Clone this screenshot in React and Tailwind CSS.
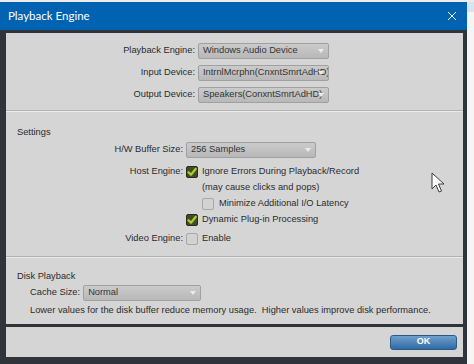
import React from 'react';

const font = { fontFamily: '"Liberation Sans", Arial, sans-serif' };

function Dropdown({ value, width }) {
  return (
    <div
      className="relative h-[16px] flex items-center rounded-[2px] border border-[#a0a0a0] bg-gradient-to-b from-[#cbcbcb] to-[#b8b8b8] pl-[4px] text-[#333333] overflow-hidden whitespace-nowrap"
      style={{ width }}
    >
      <span className="pr-[12px]">{value}</span>
      <span className="absolute right-[4px] top-[5px] w-0 h-0 border-l-[3px] border-r-[3px] border-t-[4px] border-l-transparent border-r-transparent border-t-[#ececec]" />
    </div>
  );
}

function Check({ on }) {
  if (on) {
    return (
      <div className="w-[12px] h-[12px] rounded-[2px] bg-[#45472f] border border-[#2a2c20] flex items-center justify-center shrink-0">
        <svg width="10" height="10" viewBox="0 0 10 10">
          <path d="M1.5 5.2 L4 7.8 L8.8 1.8" fill="none" stroke="#a8d21e" strokeWidth="2.2" strokeLinecap="round" strokeLinejoin="round" />
        </svg>
      </div>
    );
  }
  return <div className="w-[12px] h-[12px] rounded-[2px] bg-[#d2d2d2] border border-[#a8a8a8] shrink-0" />;
}

function Row({ label, labelW, children, className = '' }) {
  return (
    <div className={`flex items-center h-[16px] ${className}`}>
      <div className="text-right pr-[3px] shrink-0" style={{ width: labelW }}>{label}</div>
      {children}
    </div>
  );
}

export default function App() {
  return (
    <div className="w-[474px] h-[364px] overflow-hidden bg-[#f3f3f3] flex flex-col" style={font}>
      <div className="h-[2px] bg-[#ececec]" />
      <div className="flex flex-1">
        <div className="w-[467px] flex flex-col">
          {/* title bar */}
          <div className="h-[28px] bg-[#0063b1] flex items-center justify-between pl-[8px] pr-[10px]">
            <span className="text-white text-[11.5px]" style={{ fontFamily: 'Lato, "Liberation Sans", sans-serif' }}>Playback Engine</span>
            <svg width="10" height="10" viewBox="0 0 10 10">
              <path d="M1 1 L9 9 M9 1 L1 9" stroke="#ffffff" strokeWidth="1" />
            </svg>
          </div>

          {/* body */}
          <div className="flex-1 bg-[#2e343a] pl-[6px] pr-[4px] pt-[3px] pb-[7px] flex flex-col gap-[3px]">
            <div className="bg-[#d5d5d5] text-[9.3px] text-[#2b2b2b] flex flex-col">
              {/* devices */}
              <div className="h-[78px] pt-[10px] flex flex-col gap-[6px] border-b border-[#b2b2b2]">
                <Row label="Playback Engine:" labelW={192}>
                  <Dropdown value="Windows Audio Device" width={131} />
                </Row>
                <Row label="Input Device:" labelW={192}>
                  <Dropdown value="IntrnlMcrphn(CnxntSmrtAdHD)" width={131} />
                </Row>
                <Row label="Output Device:" labelW={192}>
                  <Dropdown value="Speakers(ConxntSmrtAdHD)" width={131} />
                </Row>
              </div>

              {/* settings */}
              <div className="h-[146px] border-t border-[#ebebeb] border-b border-b-[#b2b2b2] relative">
                <div className="pl-[11px] pt-[14px] h-[12px] box-content leading-[12px]">Settings</div>
                <Row label="H/W Buffer Size:" labelW={180} className="mt-[4px]">
                  <Dropdown value="256 Samples" width={130} />
                </Row>
                <Row label="Host Engine:" labelW={180} className="mt-[6px]">
                  <Check on />
                  <span className="ml-[4px]">Ignore Errors During Playback/Record</span>
                </Row>
                <Row label="" labelW={180}>
                  <span className="ml-[16px]">(may cause clicks and pops)</span>
                </Row>
                <Row label="" labelW={180}>
                  <div className="ml-[16px]"><Check /></div>
                  <span className="ml-[5px]">Minimize Additional I/O Latency</span>
                </Row>
                <Row label="" labelW={180}>
                  <Check on />
                  <span className="ml-[4px]">Dynamic Plug-in Processing</span>
                </Row>
                <Row label="Video Engine:" labelW={180} className="mt-[3px]">
                  <Check />
                  <span className="ml-[4px]">Enable</span>
                </Row>
                {/* mouse pointer */}
                <svg className="absolute left-[425px] top-[60px]" width="14" height="22" viewBox="0 0 14 22">
                  <path d="M1 1 L1 17 L5 13 L8 20 L10.5 19 L7.5 12 L13 12 Z" fill="#ffffff" stroke="#3a3a3a" strokeWidth="1" strokeLinejoin="round" />
                </svg>
              </div>

              {/* disk playback */}
              <div className="h-[67px] border-t border-[#ebebeb] pt-[12px]">
                <div className="pl-[11px] leading-[12px]">Disk Playback</div>
                <div className="flex items-center h-[16px] mt-[3px] pl-[24px]">
                  <span className="mr-[3px]">Cache Size:</span>
                  <Dropdown value="Normal" width={118} />
                </div>
                <div className="pl-[24px] mt-[3px] leading-[12px] whitespace-nowrap">
                  Lower values for the disk buffer reduce memory usage.&nbsp; Higher values improve disk performance.
                </div>
              </div>
            </div>

            {/* button bar */}
            <div className="flex-1 bg-[#d5d5d5] flex items-center justify-end pr-[6px]">
              <div className="w-[67px] h-[15px] rounded-[3px] border border-[#2c5a87] bg-gradient-to-b from-[#6f9fcc] to-[#2f6ba6] flex items-center justify-center text-white text-[9px] font-bold">
                OK
              </div>
            </div>
          </div>
        </div>
        <div className="flex-1 bg-[#f5f5f5]">
          <div className="h-[10px] bg-[#d8e4f0]" />
        </div>
      </div>
    </div>
  );
}
